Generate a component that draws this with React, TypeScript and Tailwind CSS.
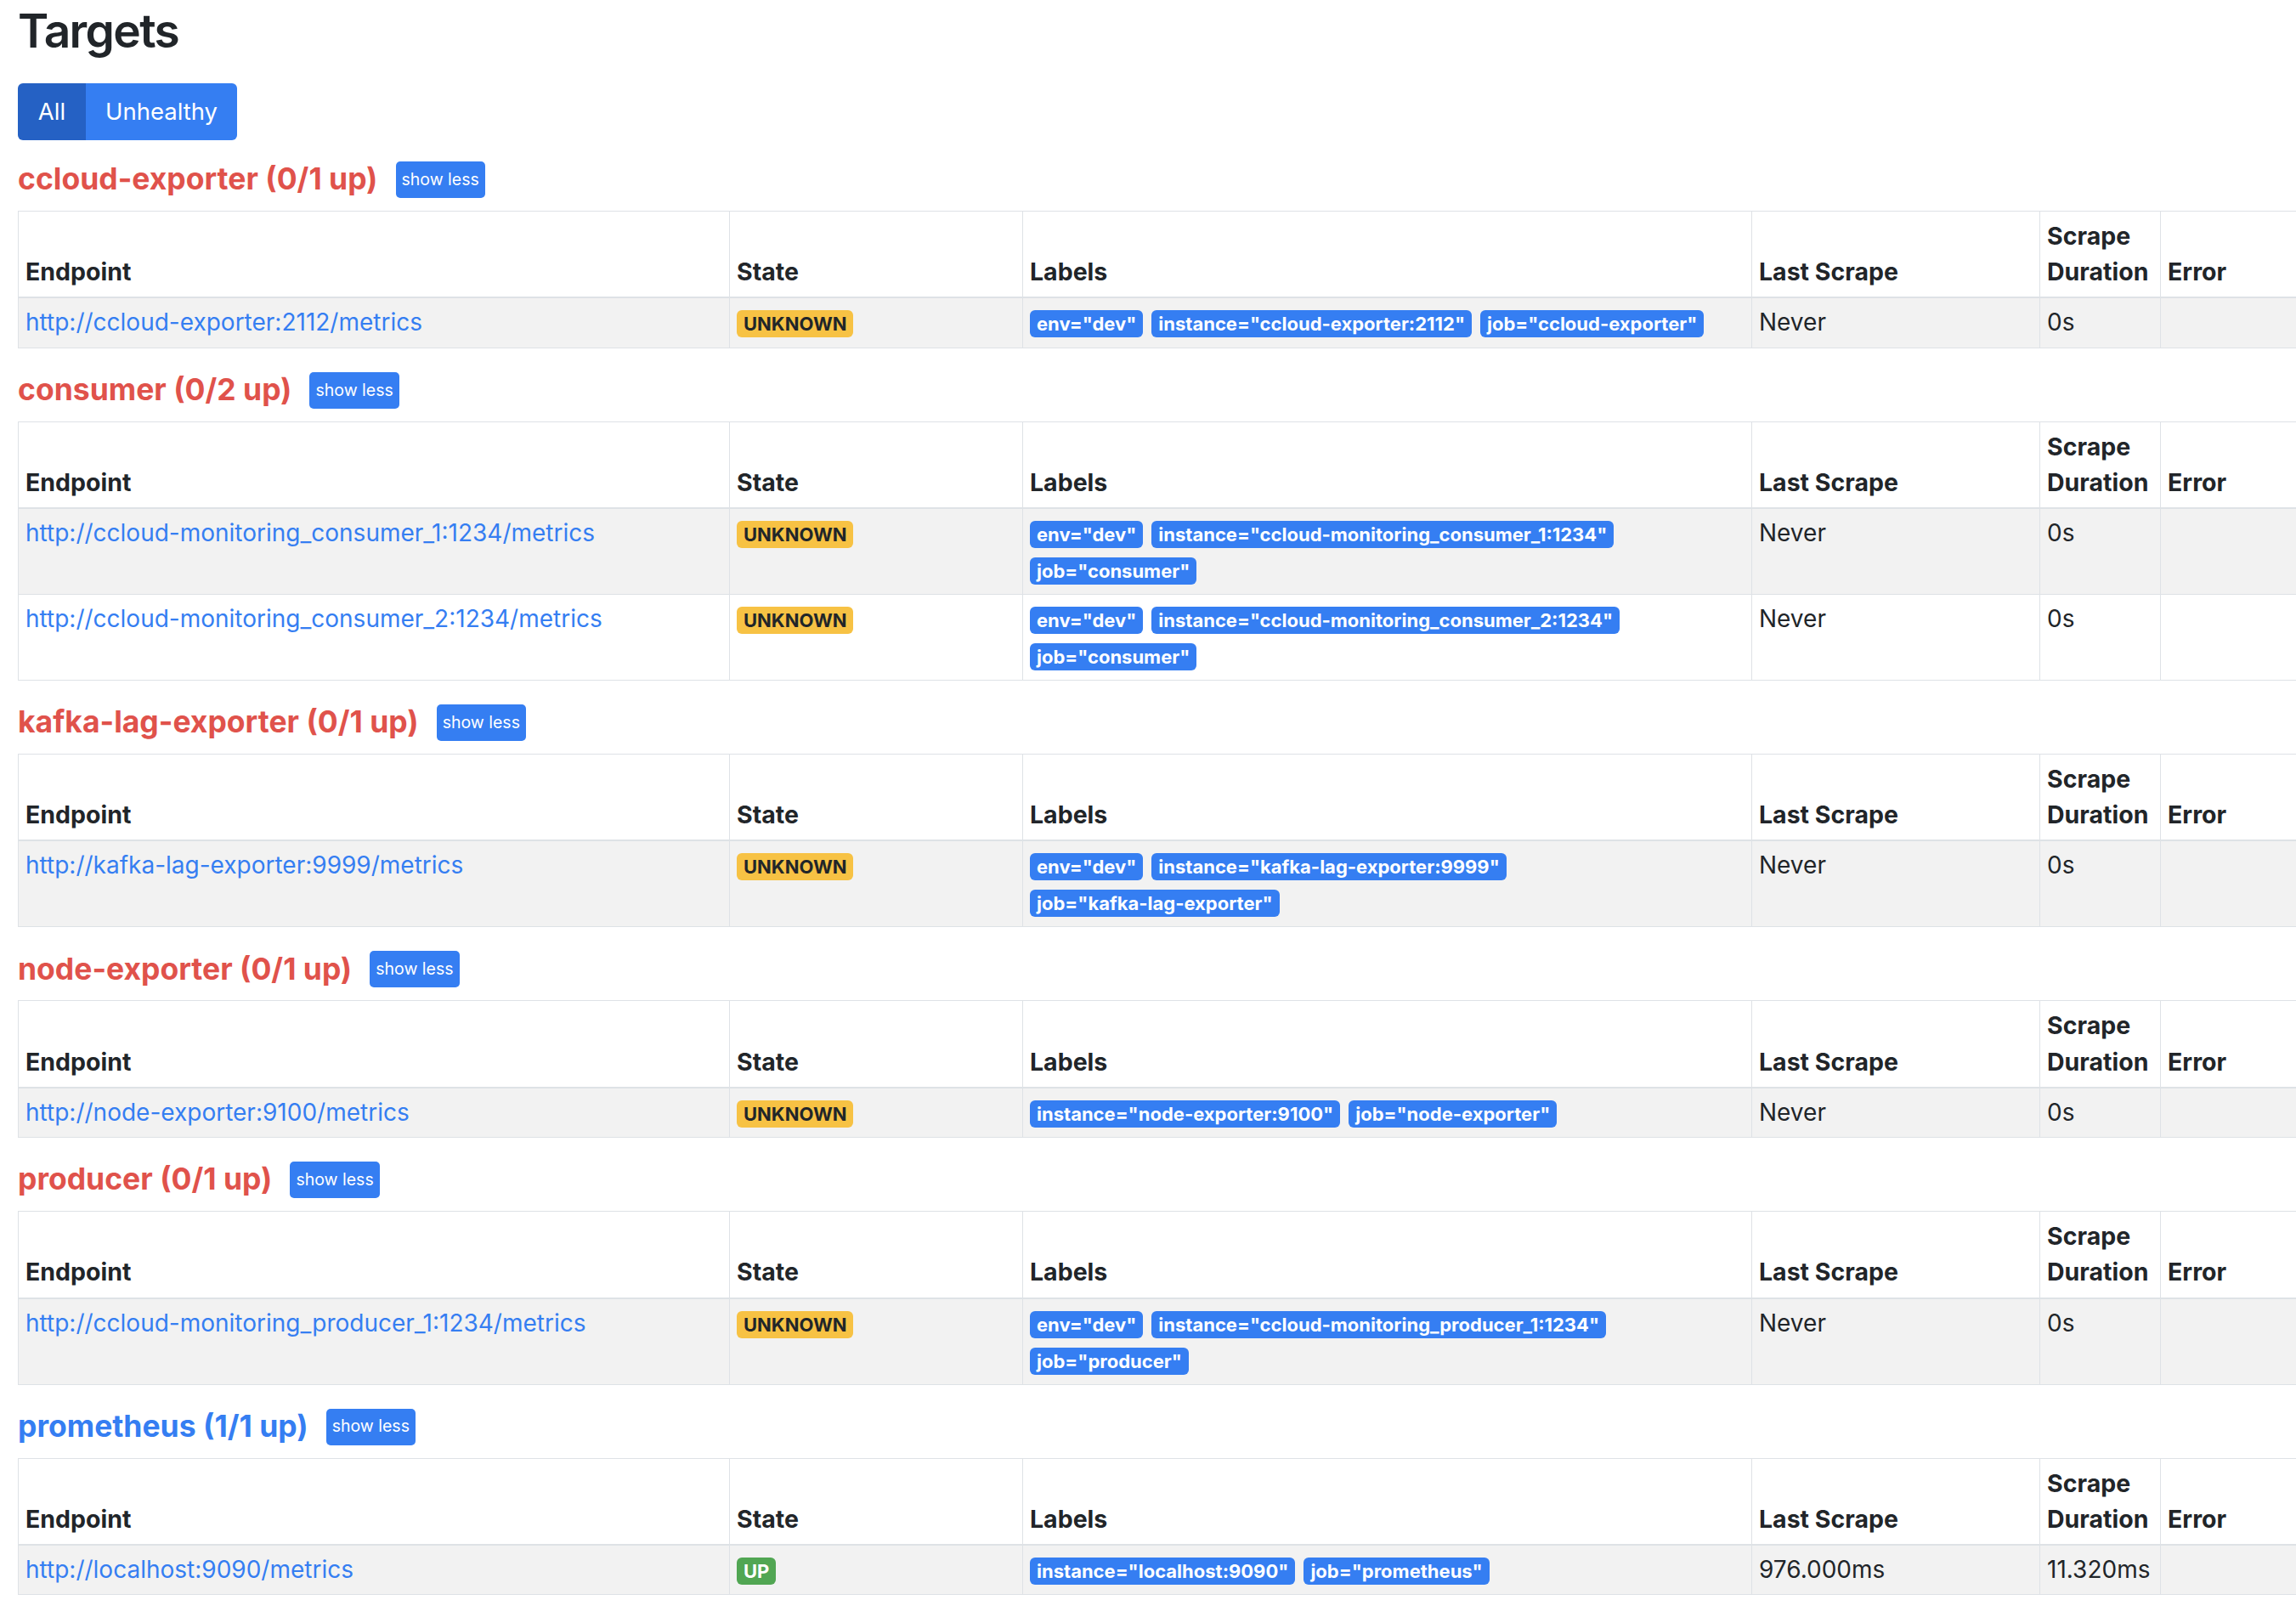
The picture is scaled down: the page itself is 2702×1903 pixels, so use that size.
import React from 'react';

type Target = {
  endpoint: string;
  state: 'UNKNOWN' | 'UP';
  labels: string[];
  lastScrape: string;
  duration: string;
};

type Pool = { name: string; up: number; targets: Target[] };

const unknown = (endpoint: string, labels: string[]): Target => ({
  endpoint,
  state: 'UNKNOWN',
  labels,
  lastScrape: 'Never',
  duration: '0s',
});

const pools: Pool[] = [
  {
    name: 'ccloud-exporter',
    up: 0,
    targets: [
      unknown('http://ccloud-exporter:2112/metrics', [
        'env="dev"',
        'instance="ccloud-exporter:2112"',
        'job="ccloud-exporter"',
      ]),
    ],
  },
  {
    name: 'consumer',
    up: 0,
    targets: [
      unknown('http://ccloud-monitoring_consumer_1:1234/metrics', [
        'env="dev"',
        'instance="ccloud-monitoring_consumer_1:1234"',
        'job="consumer"',
      ]),
      unknown('http://ccloud-monitoring_consumer_2:1234/metrics', [
        'env="dev"',
        'instance="ccloud-monitoring_consumer_2:1234"',
        'job="consumer"',
      ]),
    ],
  },
  {
    name: 'kafka-lag-exporter',
    up: 0,
    targets: [
      unknown('http://kafka-lag-exporter:9999/metrics', [
        'env="dev"',
        'instance="kafka-lag-exporter:9999"',
        'job="kafka-lag-exporter"',
      ]),
    ],
  },
  {
    name: 'node-exporter',
    up: 0,
    targets: [
      unknown('http://node-exporter:9100/metrics', [
        'instance="node-exporter:9100"',
        'job="node-exporter"',
      ]),
    ],
  },
  {
    name: 'producer',
    up: 0,
    targets: [
      unknown('http://ccloud-monitoring_producer_1:1234/metrics', [
        'env="dev"',
        'instance="ccloud-monitoring_producer_1:1234"',
        'job="producer"',
      ]),
    ],
  },
  {
    name: 'prometheus',
    up: 1,
    targets: [
      {
        endpoint: 'http://localhost:9090/metrics',
        state: 'UP',
        labels: ['instance="localhost:9090"', 'job="prometheus"'],
        lastScrape: '976.000ms',
        duration: '11.320ms',
      },
    ],
  },
];

const th =
  'border border-[#dee2e6] border-b-2 px-[8px] py-[8px] text-left align-bottom font-bold text-[28.5px]';
const td = 'border border-[#dee2e6] px-[8px] py-[8px] align-top';
const badge = 'inline-block px-[8px] py-[5px] rounded-[6px] text-[22px] font-bold leading-none';

const PoolPanel = ({ pool }: { pool: Pool }) => {
  const healthy = pool.up === pool.targets.length;
  return (
    <div>
      <div className="flex items-center h-[43px] mb-[15px]">
        <span
          className={`text-[35.5px] font-bold leading-[1.2] ${
            healthy ? 'text-[#357ef2]' : 'text-[#e0524b]'
          }`}
        >
          {pool.name} ({pool.up}/{pool.targets.length} up)
        </span>
        <button className="ml-[21px] h-[43px] px-[7px] rounded-[5px] bg-[#357ef2] text-white text-[19.5px] leading-none">
          show less
        </button>
      </div>
      <table className="table-fixed border-collapse w-[2740px] mb-[28px]">
        <colgroup>
          <col className="w-[837px]" />
          <col className="w-[345px]" />
          <col className="w-[858px]" />
          <col className="w-[339px]" />
          <col className="w-[142px]" />
          <col />
        </colgroup>
        <thead>
          <tr>
            <th className={th}>Endpoint</th>
            <th className={th}>State</th>
            <th className={th}>Labels</th>
            <th className={th}>Last Scrape</th>
            <th className={th}>Scrape Duration</th>
            <th className={th}>Error</th>
          </tr>
        </thead>
        <tbody>
          {pool.targets.map((t, i) => (
            <tr key={t.endpoint} className={i % 2 === 0 ? 'bg-[#f2f2f2]' : 'bg-white'}>
              <td className={td}>
                <a className="text-[#357ef2]" href="#">
                  {t.endpoint}
                </a>
              </td>
              <td className={td}>
                <span
                  className={`${badge} ${
                    t.state === 'UP' ? 'bg-[#51a653] text-white' : 'bg-[#f7c244] text-[#212529]'
                  }`}
                >
                  {t.state}
                </span>
              </td>
              <td className="border border-[#dee2e6] px-[8px] py-[7px] align-top leading-[43px]">
                {t.labels.map(l => (
                  <span key={l} className={`${badge} mr-[10px] bg-[#357ef2] text-white`}>
                    {l}
                  </span>
                ))}
              </td>
              <td className={td}>{t.lastScrape}</td>
              <td className={td}>{t.duration}</td>
              <td className={td}></td>
            </tr>
          ))}
        </tbody>
      </table>
    </div>
  );
}

export default function App() {
  return (
    <div className="w-[2702px] min-h-[1903px] overflow-hidden bg-white text-[#212529] font-['Inter','Liberation_Sans',sans-serif] text-[28px] leading-[1.48]">
      <div className="pl-[21px]">
        <h2 className="text-[55px] font-semibold tracking-[-0.03em] leading-[66px] mt-[3px] mb-[29px]">Targets</h2>
        <div className="flex h-[67px] w-fit rounded-[6px] overflow-hidden mb-[25px] text-white text-[27.5px]">
          <button className="w-[80px] bg-[#2561c4]">All</button>
          <button className="w-[178px] bg-[#357ef2]">Unhealthy</button>
        </div>
        {pools.map(p => (
          <PoolPanel key={p.name} pool={p} />
        ))}
      </div>
    </div>
  );
}
